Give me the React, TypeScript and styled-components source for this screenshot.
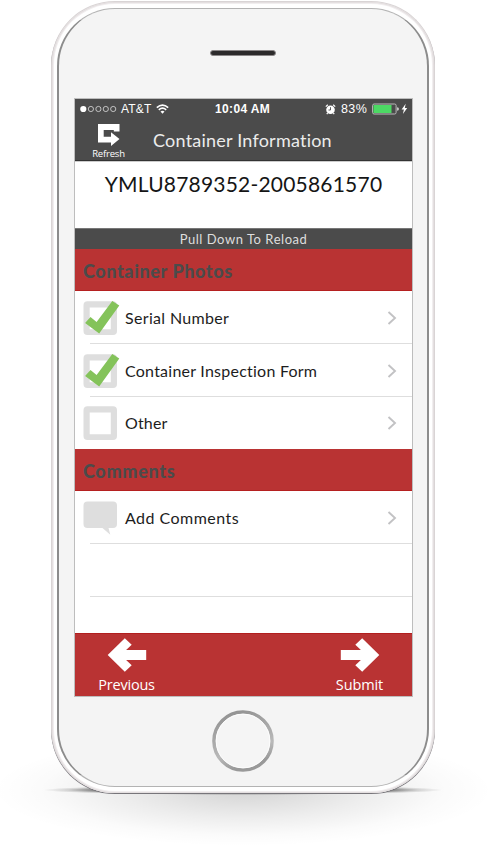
import React from "react";
import styled, { createGlobalStyle } from "styled-components";

const GlobalStyle = createGlobalStyle`
  *, *::before, *::after { box-sizing: border-box; }
  body { margin: 0; background: #fff; font-family: Lato, "Liberation Sans", sans-serif; }
  svg { display: block; flex: none; }
`;

const Stage = styled.main`
  position: relative;
  width: 501px;
  height: 856px;
  padding: 1px 0 0 51px;
  overflow: hidden;
  background: #fff;
`;

const Shadow = styled.svg`
  position: absolute;
  left: 0;
  top: 740px;
`;

const Phone = styled.div`
  position: relative;
  width: 384px;
  height: 792px;
  padding: 6px 5px 5px;
  border: 1px solid #d9d4d5;
  border-bottom: 0;
  border-radius: 64px;
  background: #fff;
  box-shadow: inset 0 0 0 1px #e4dfe0, inset 0 0 0 2px #f1eeef, 0 1px 0 #77757a;
`;

const Glass = styled.div`
  display: flex;
  flex-direction: column;
  align-items: center;
  width: 372px;
  height: 779px;
  border: 1px solid #b3b3b3;
  border-left: 2px solid #8c8c8c;
  border-right: 2px solid #8c8c8c;
  border-radius: 58px;
  background: #f4f4f4;
`;

const Speaker = styled.div`
  width: 66px;
  height: 6px;
  margin-top: 41px;
  border: 1px solid #8b8788;
  border-radius: 3px;
  background: #2c2a2b;
`;

const Screen = styled.div`
  display: flex;
  flex-direction: column;
  width: 339px;
  height: 599px;
  margin: 42px 0 0 1px;
  border: 1px solid #bdbdbd;
  background: #fff;
`;

const HomeButton = styled.svg`
  margin: 12px 0 0 0;
`;

const Header = styled.header`
  height: 62px;
  flex: none;
  background: #4b4b4b;
  border-bottom: 1px solid #333;
  color: #fff;
`;

const StatusBar = styled.div`
  display: grid;
  grid-template-columns: 135px 65px 1fr;
  align-items: center;
  height: 20px;
  font-family: "Liberation Sans", sans-serif;
`;

const StatusGroup = styled.div<{ $start: number; $gap: number }>`
  display: flex;
  align-items: center;
  gap: ${(p) => p.$gap}px;
  padding-left: ${(p) => p.$start}px;
`;

const Text = styled.span<{ $size: number; $spacing?: number; $weight?: number }>`
  font-size: ${(p) => p.$size}px;
  letter-spacing: ${(p) => p.$spacing ?? 0}px;
  font-weight: ${(p) => p.$weight ?? 400};
  line-height: 1.2;
  white-space: nowrap;
`;

const NavBar = styled.div`
  display: flex;
  height: 41px;
`;

const RefreshButton = styled.div`
  display: flex;
  flex-direction: column;
  align-items: center;
  width: 67px;
  padding-top: 5px;
  font-family: "Open Sans", sans-serif;
`;

const RefreshLabel = styled.span`
  margin-top: 2px;
  font-size: 9.5px;
  letter-spacing: -0.2px;
  line-height: 12px;
`;

const Title = styled.div`
  padding: 11px 0 0 11px;
  color: #ececec;
`;

const ContainerNumber = styled.div`
  display: flex;
  justify-content: center;
  height: 67px;
  padding-top: 9px;
  border-top: 1px solid #ccc;
  color: #151515;
`;

const PullBar = styled.div`
  display: flex;
  align-items: center;
  justify-content: center;
  height: 21px;
  padding-top: 1px;
  border-top: 1px solid #777;
  background: #4b4b4b;
  color: #dedede;
`;

const SectionHeader = styled.div`
  display: flex;
  align-items: center;
  height: 42px;
  padding: 5px 0 0 8px;
  background: #b93333;
  border-bottom: 1px solid #b52020;
  color: #4b4b4b;
`;

const Row = styled.div<{ $height: number; $last?: boolean }>`
  position: relative;
  display: flex;
  align-items: center;
  height: ${(p) => p.$height}px;
  padding: 0 15px 0 8px;
  color: #1d1d1d;

  &::after {
    content: "";
    position: absolute;
    left: 15px;
    right: 0;
    bottom: 0;
    height: 1px;
    background: ${(p) => (p.$last ? "transparent" : "#dedede")};
  }
`;

const RowLabel = styled.div`
  flex: 1;
  margin-left: 4px;
`;

const Footer = styled.footer`
  display: flex;
  justify-content: space-between;
  height: 63px;
  margin-top: auto;
  padding: 0 24px 0 23px;
  border-top: 1px solid #b21e1e;
  background: #b93333;
  color: #fff;
  font-family: "Open Sans", sans-serif;
`;

const FooterButton = styled.div`
  display: flex;
  flex-direction: column;
  align-items: center;
  gap: 3px;
  width: 57px;
  padding-top: 3px;
`;

const Signal = () => (
  <svg width="37" height="8" viewBox="0 0 37 8">
    <circle cx="3.3" cy="4" r="3.1" fill="#fff" />
    {[10.9, 18.4, 25.8, 33.2].map((x) => (
      <circle key={x} cx={x} cy="4" r="2.6" fill="none" stroke="#ddd" strokeWidth=".8" />
    ))}
  </svg>
);

const Wifi = () => (
  <svg width="13" height="10" viewBox="0 0 13 10">
    <path d="M.8 3.6Q6.5-1.3 12.2 3.6M2.8 5.8Q6.5 2.6 10.2 5.8" fill="none" stroke="#fff" strokeWidth="1.6" />
    <path d="M4.5 7.5Q6.5 6 8.5 7.5L6.5 9.7Z" fill="#fff" />
  </svg>
);

const Alarm = () => (
  <svg width="11" height="11" viewBox="0 0 11 11">
    <circle cx="5.5" cy="5.8" r="4.3" fill="#fff" />
    <path d="M.8 2.6 2.8 .8M10.2 2.6 8.2 .8M2.6 9 1.8 10.2M8.4 9l.8 1.2" stroke="#fff" strokeWidth="1.2" />
    <path d="M5.5 3.2v2.8H3.5" fill="none" stroke="#4b4b4b" strokeWidth=".9" />
  </svg>
);

const Battery = () => (
  <svg width="36" height="12" viewBox="0 0 36 12">
    <rect x=".6" y="1" width="23.5" height="10" rx="1.5" fill="#4b4b4b" stroke="#bbb" strokeWidth="1" />
    <rect x="1.5" y="2" width="18" height="8" fill="#4cd964" />
    <path d="M25.3 4.2q1.4.3 1.4 1.8t-1.4 1.8z" fill="#fff" />
    <path d="M33.7.8 29.6 6.6h2.3L30.9 11 35.2 5h-2.4z" fill="#fff" />
  </svg>
);

const RefreshIcon = () => (
  <svg width="22" height="22" viewBox="0 0 22 22">
    <path d="M0 0H21.500V7.500H15.800V6H5.700V12.700H13V8.200L21.500 15 13 22V18.400H0Z" fill="#fff" />
  </svg>
);

const CheckBox = ({ checked = false }: { checked?: boolean }) => (
  <svg width="38" height="38" viewBox="0 0 38 38">
    <path
      fillRule="evenodd"
      d="M4.500 2.200H30a4 4 0 0 1 4 4V32a4 4 0 0 1-4 4H4.500a4 4 0 0 1-4-4V6.200a4 4 0 0 1 4-4ZM6.700 8.500V30.300H27.800V8.500Z"
      fill="#dedede"
    />
    {checked && <path d="M2.100 24 7.500 18 13.600 23.100 29.300 2 36.300 6.500 16.200 34.400Z" fill="#84c35a" />}
  </svg>
);

const CommentIcon = () => (
  <svg width="38" height="38" viewBox="0 0 38 38">
    <path d="M4.500 2.500H30a4 4 0 0 1 4 4V25a4 4 0 0 1-4 4H25.500L27.300 35.700 19.500 29H4.500a4 4 0 0 1-4-4V6.500a4 4 0 0 1 4-4Z" fill="#dedede" />
  </svg>
);

const Chevron = () => (
  <svg width="10" height="14" viewBox="0 0 10 14">
    <path d="M1.500 1 8 7 1.500 13" fill="none" stroke="#c2c2c4" strokeWidth="1.900" />
  </svg>
);

const Arrow = ({ right = false }: { right?: boolean }) => (
  <svg width="40" height="36" viewBox="0 0 40 36">
    <path
      transform={right ? "matrix(-1 0 0 1 40 0)" : undefined}
      d="M.700 18 17.800 1.200 24.700 7.800 19.100 13H39.200V23H19.100L24.700 28.300 17.800 34.800Z"
      fill="#fff"
    />
  </svg>
);

const ListRow = ({ label, spacing, height, last, children }: {
  label: string; spacing: number; height: number; last?: boolean; children: React.ReactNode;
}) => (
  <Row $height={height} $last={last}>
    {children}
    <RowLabel><Text $size={16} $spacing={spacing}>{label}</Text></RowLabel>
    <Chevron />
  </Row>
);

export default function App() {
  return (
    <>
      <GlobalStyle />
      <Stage>
        <Shadow width="501" height="116" viewBox="0 0 501 116">
          <defs>
            <radialGradient id="floor">
              <stop offset="0" stopColor="#000" stopOpacity=".17" />
              <stop offset=".5" stopColor="#000" stopOpacity=".07" />
              <stop offset=".8" stopColor="#000" stopOpacity=".018" />
              <stop offset="1" stopColor="#000" stopOpacity="0" />
            </radialGradient>
            <radialGradient id="contact">
              <stop offset="0" stopColor="#000" stopOpacity=".5" />
              <stop offset=".72" stopColor="#000" stopOpacity=".5" />
              <stop offset=".88" stopColor="#000" stopOpacity=".14" />
              <stop offset="1" stopColor="#000" stopOpacity="0" />
            </radialGradient>
          </defs>
          <ellipse cx="243" cy="50" rx="250" ry="56" fill="url(#floor)" />
          <ellipse cx="243" cy="50" rx="200" ry="5" fill="url(#contact)" />
        </Shadow>
        <Phone>
          <Glass>
            <Speaker />
            <Screen>
              <Header>
                <StatusBar>
                  <StatusGroup $start={5} $gap={4}>
                    <Signal />
                    <Text $size={12} $spacing={0.2}>AT&amp;T</Text>
                    <Wifi />
                  </StatusGroup>
                  <StatusGroup $start={5} $gap={0}>
                    <Text $size={12} $spacing={0.35} $weight={700}>10:04 AM</Text>
                  </StatusGroup>
                  <StatusGroup $start={50} $gap={5}>
                    <Alarm />
                    <Text $size={12.5} $spacing={0.4}>83%</Text>
                    <Battery />
                  </StatusGroup>
                </StatusBar>
                <NavBar>
                  <RefreshButton>
                    <RefreshIcon />
                    <RefreshLabel>Refresh</RefreshLabel>
                  </RefreshButton>
                  <Title><Text $size={18} $spacing={0.22}>Container Information</Text></Title>
                </NavBar>
              </Header>
              <ContainerNumber>
                <Text $size={21} $spacing={0.2}>YMLU8789352-2005861570</Text>
              </ContainerNumber>
              <PullBar><Text $size={13} $spacing={0.54}>Pull Down To Reload</Text></PullBar>
              <SectionHeader><Text $size={18} $spacing={0.6} $weight={900}>Container Photos</Text></SectionHeader>
              <ListRow label="Serial Number" spacing={0.33} height={53}><CheckBox checked /></ListRow>
              <ListRow label="Container Inspection Form" spacing={0.24} height={53}><CheckBox checked /></ListRow>
              <ListRow label="Other" spacing={0.15} height={52} last><CheckBox /></ListRow>
              <SectionHeader><Text $size={18} $spacing={0.7} $weight={900}>Comments</Text></SectionHeader>
              <ListRow label="Add Comments" spacing={0.46} height={53}><CommentIcon /></ListRow>
              <Row $height={53} />
              <Footer>
                <FooterButton>
                  <Arrow />
                  <Text $size={14.5} $spacing={-0.2}>Previous</Text>
                </FooterButton>
                <FooterButton>
                  <Arrow right />
                  <Text $size={14.5} $spacing={-0.1}>Submit</Text>
                </FooterButton>
              </Footer>
            </Screen>
            <HomeButton width="64" height="64" viewBox="0 0 64 64">
              <defs>
                <linearGradient id="ring" x1="0" y1="0" x2=".3" y2="1">
                  <stop offset="0" stopColor="#8e8e8e" />
                  <stop offset=".75" stopColor="#b9b9b9" />
                  <stop offset="1" stopColor="#999" />
                </linearGradient>
              </defs>
              <circle cx="32" cy="32" r="29" fill="none" stroke="url(#ring)" strokeWidth="3.600" />
              <circle cx="32" cy="32" r="26.900" fill="#f5f5f5" stroke="#fff" strokeWidth=".8" />
            </HomeButton>
          </Glass>
        </Phone>
      </Stage>
    </>
  );
}
